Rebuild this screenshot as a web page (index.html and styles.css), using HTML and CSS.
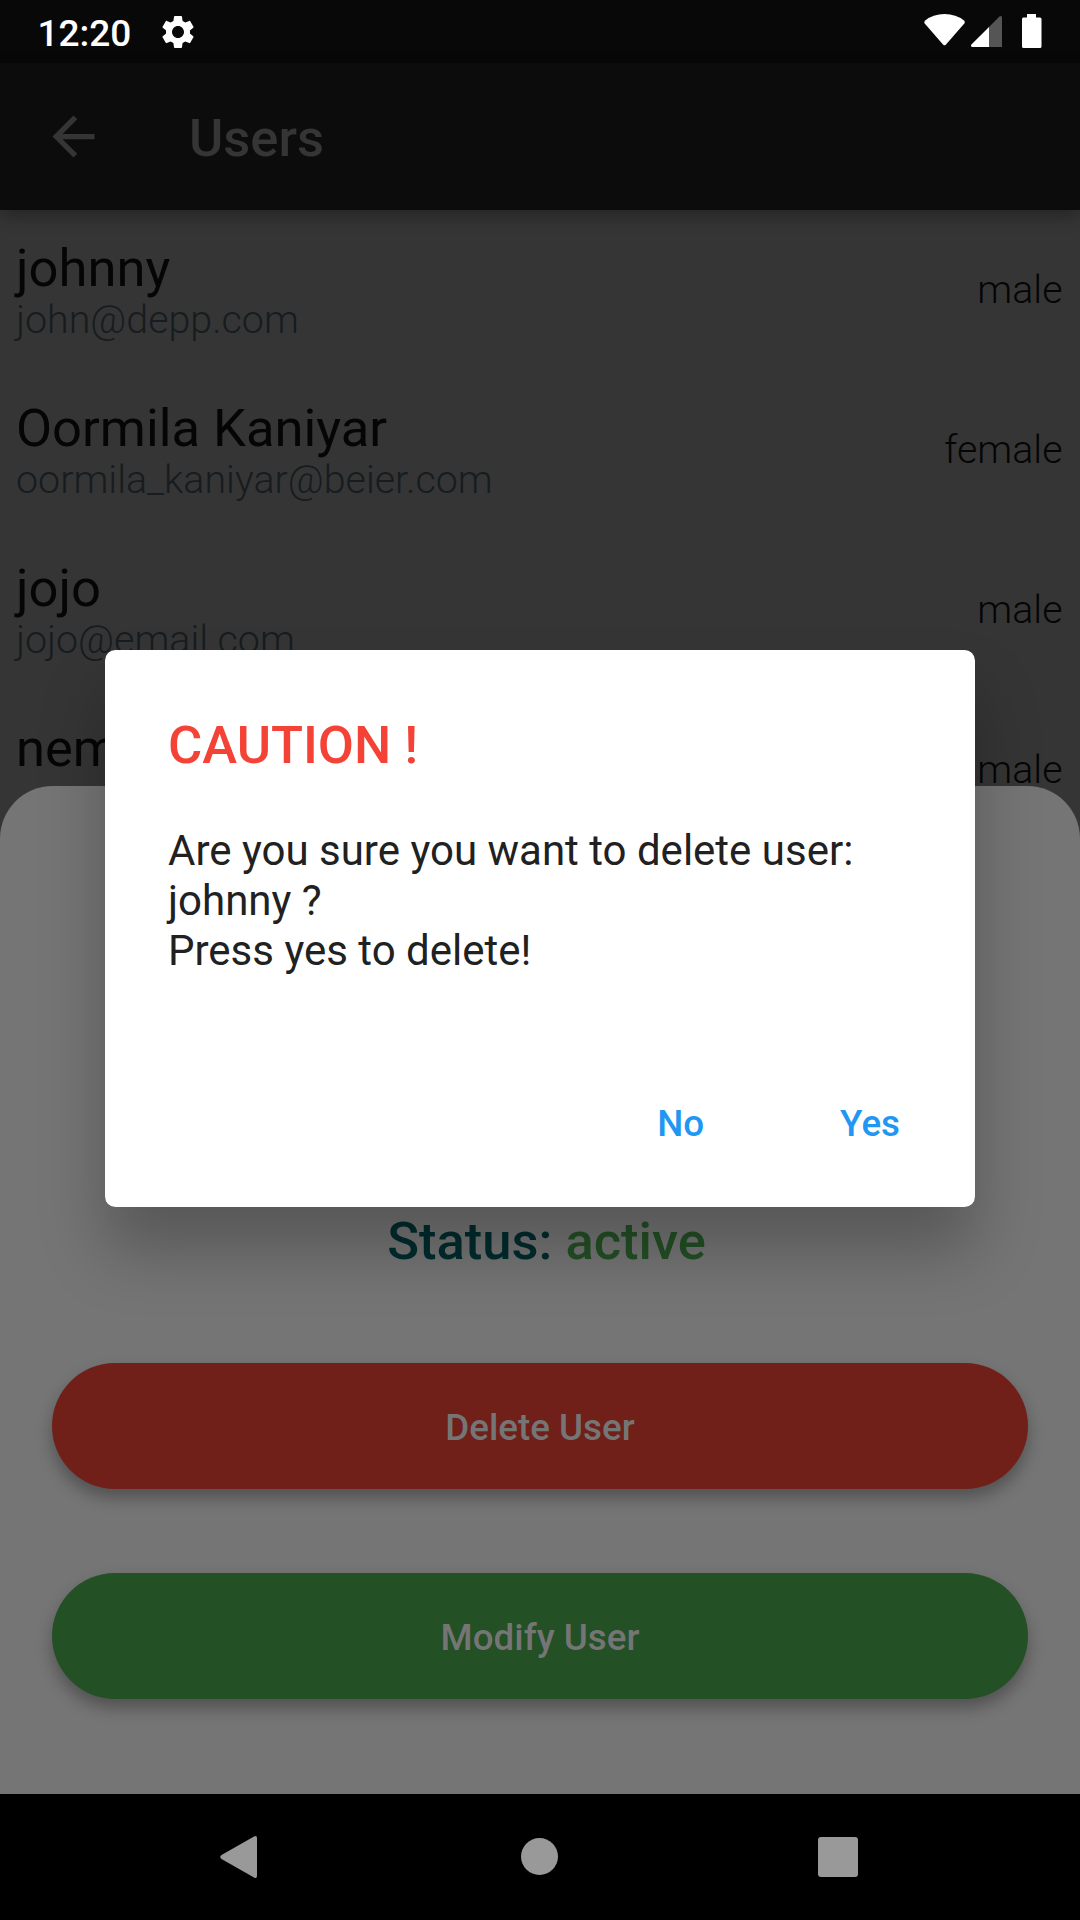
FILE: index.html
```html
<!DOCTYPE html>
<html lang="en">
<head>
<meta charset="utf-8">
<title>Users</title>
<link rel="stylesheet" href="styles.css">
</head>
<body>
<div class="screen">
  <header class="status-bar">
    <span class="clock">12:20</span>
    <svg class="gear" viewBox="0 0 24 24"><path d="M19.14 12.94c.04-.3.06-.61.06-.94 0-.32-.02-.64-.07-.94l2.03-1.58c.18-.14.23-.41.12-.61l-1.92-3.32c-.12-.22-.37-.29-.59-.22l-2.39.96c-.5-.38-1.03-.7-1.62-.94L14.4 2.81c-.04-.24-.24-.41-.48-.41h-3.84c-.24 0-.43.17-.47.41l-.36 2.54c-.59.24-1.13.57-1.62.94l-2.39-.96c-.22-.08-.47 0-.59.22L2.74 8.87c-.12.21-.08.47.12.61l2.03 1.58c-.05.3-.09.63-.09.94s.02.64.07.94l-2.03 1.58c-.18.14-.23.41-.12.61l1.92 3.32c.12.22.37.29.59.22l2.39-.96c.5.38 1.03.7 1.62.94l.36 2.54c.05.24.24.41.48.41h3.84c.24 0 .44-.17.47-.41l.36-2.54c.59-.24 1.13-.56 1.62-.94l2.39.96c.22.08.47 0 .59-.22l1.92-3.32c.12-.22.07-.47-.12-.61l-2.01-1.58zM12 15.6c-1.98 0-3.6-1.62-3.6-3.6s1.62-3.6 3.6-3.6 3.6 1.62 3.6 3.6-1.62 3.6-3.6 3.6z"/></svg>
    <svg class="indicators" viewBox="0 0 120 63">
      <path d="M5.2 20.5Q13 14 24.5 14T44 20.5Q45.6 22 44.300 23.500L26 44.500Q24.500 46.200 23 44.500L4.700 23.500Q3.600 22 5.200 20.500Z"/>
      <path class="dim" d="M69 27 79.500 16.500Q82 15 82 18V47H69Z"/>
      <path d="M69 27V47H52.500Q50.500 47 51.200 44.800Z"/>
      <path d="M107 14h9v3.500h4q1.500 0 1.500 1.500v27.500q0 1.500-1.500 1.500h-16.500q-1.500 0-1.500-1.500V19q0-1.500 1.500-1.500h3.500z"/>
    </svg>
  </header>
  <div class="app-bar">
    <svg class="back" viewBox="0 0 24 24"><path d="M20 11H7.830l5.590-5.590L12 4l-8 8 8 8 1.410-1.410L7.830 13H20v-2z"/></svg>
    <h1 class="title">Users</h1>
  </div>
  <ul class="users">
    <li class="user"><div><div class="name">johnny</div><div class="email">john@depp.com</div></div><span class="gender">male</span></li>
    <li class="user"><div><div class="name">Oormila Kaniyar</div><div class="email">oormila_kaniyar@beier.com</div></div><span class="gender">female</span></li>
    <li class="user"><div><div class="name">jojo</div><div class="email">jojo@email.com</div></div><span class="gender">male</span></li>
    <li class="user"><div><div class="name">nem</div></div><span class="gender">male</span></li>
  </ul>
  <section class="sheet">
    <p class="status">Status: <span class="active">active</span></p>
    <button class="btn delete">Delete User</button>
    <button class="btn modify">Modify User</button>
  </section>
  <section class="dialog" role="alertdialog">
    <h2 class="dialog-title">CAUTION !</h2>
    <p class="dialog-body">Are you sure you want to delete user:<br>johnny ?<br>Press yes to delete!</p>
    <div class="actions"><button class="action">No</button><button class="action">Yes</button></div>
  </section>
  <nav class="nav-bar">
    <svg viewBox="0 0 44 44"><path d="M38 1.500Q41 0 41 3V41Q41 44 38 42.500L5.500 24Q3 22 5.500 20Z"/></svg>
    <svg viewBox="0 0 44 44"><circle cx="23.500" cy="21.500" r="18.500"/></svg>
    <svg viewBox="0 0 44 44"><rect x="2" y="2" width="40" height="40" rx="3"/></svg>
  </nav>
</div>
</body>
</html>
```
FILE: styles.css
```css
* { box-sizing: border-box; margin: 0; padding: 0; }
body { background: #000; font-family: Roboto, sans-serif; }
button { border: 0; background: none; font: inherit; }
.screen {
  position: relative;
  display: flex;
  flex-direction: column;
  width: 1080px;
  height: 1920px;
  overflow: hidden;
  background: #353535;
}

.status-bar {
  display: flex;
  align-items: center;
  flex: none;
  height: 63px;
  padding-left: 37.500px;
  background: #080808;
  color: #fff;
}
.clock { width: 120.500px; font-size: 37px; font-weight: 500; line-height: 63px; padding-top: 3px; }
.gear { width: 40px; height: 40px; fill: #fff; }
.indicators { width: 120px; height: 63px; margin-left: auto; margin-right: 40px; fill: #fff; overflow: visible; }
.indicators .dim { fill: #555; }

.app-bar {
  display: flex;
  align-items: center;
  flex: none;
  height: 147px;
  padding-left: 42px;
  background: #0c0c0c;
  box-shadow: 0 6px 16px rgba(0, 0, 0, .3);
  z-index: 1;
}
.back { width: 63px; height: 63px; fill: #353535; }
.title { margin-left: 84px; font-size: 52.500px; font-weight: 500; line-height: 60px; color: #353535; padding-top: 3px; }

.users { flex: 1; min-height: 0; overflow: hidden; list-style: none; }
.user {
  display: flex;
  justify-content: space-between;
  height: 160px;
  padding: 29px 17.500px 0 16px;
}
.name { font-size: 52.500px; line-height: 58px; color: #050505; }
.email { font-size: 39.375px; font-weight: 300; line-height: 46px; color: #161c20; }
.gender { padding-top: 28px; font-size: 39.375px; font-weight: 300; line-height: 46px; color: #050505; }

.sheet {
  position: absolute;
  left: 0;
  right: 0;
  top: 786px;
  bottom: 126px;
  display: flex;
  flex-direction: column;
  padding: 425px 52.400px 0;
  border-radius: 52.500px 52.500px 0 0;
  background: #757575;
}
.status { padding-left: 13px; text-align: center; font-size: 52.500px; font-weight: 500; line-height: 60px; color: #002c2e; }
.active { color: #235025; }
.btn {
  height: 126px;
  padding-top: 2px;
  border-radius: 63px;
  box-shadow: 0 9px 16px rgba(0, 0, 0, .3);
  font-size: 36.750px;
  font-weight: 500;
  color: #757575;
}
.delete { margin-top: 92.400px; background: #701f19; }
.modify { margin-top: 84px; background: #235025; }

.dialog {
  position: absolute;
  left: 105px;
  top: 650.300px;
  width: 870px;
  height: 556.400px;
  padding: 64px 63px 0;
  border-radius: 10.500px;
  background: #fff;
  box-shadow: 0 44px 64px rgba(0, 0, 0, .25);
}
.dialog-title { font-size: 52.500px; font-weight: 500; line-height: 62px; color: #f44336; }
.dialog-body { margin-top: 50px; font-size: 42px; line-height: 50px; color: #212121; white-space: nowrap; }
.actions { display: flex; justify-content: flex-end; gap: 136px; margin-top: 126px; padding-right: 12px; }
.action { font-size: 36.750px; font-weight: 500; line-height: 44px; color: #2196f3; }

.nav-bar {
  display: flex;
  align-items: center;
  justify-content: space-between;
  flex: none;
  height: 126px;
  padding: 0 220px 0 216px;
  background: #000;
  z-index: 1;
}
.nav-bar svg { width: 44px; height: 44px; fill: #999; }
```
